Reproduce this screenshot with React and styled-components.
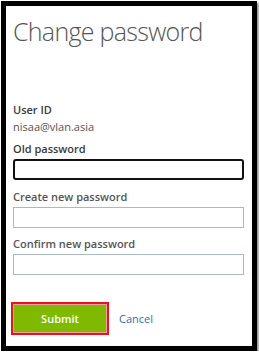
import React from 'react';
import styled, { createGlobalStyle } from 'styled-components';

const Global = createGlobalStyle`
  html, body {
    margin: 0;
    padding: 0;
    background: #fff;
  }
  body {
    font-family: "Open Sans", "Liberation Sans", sans-serif;
  }
`

const Frame = styled.div`
  box-sizing: border-box;
  width: 256px;
  height: 350px;
  margin: 1px 0 0 1px;
  border: 5px solid #000;
  box-shadow: 2px 2px 2px #9a9a9a;
  background: #fff;
  padding: 8px 0 0 7px;
  display: flex;
  flex-direction: column;
`

const Title = styled.h1`
  margin: 0;
  font-size: 25px;
  font-weight: 300;
  color: #555;
  letter-spacing: -0.7px;
  line-height: 34px;
`

const Form = styled.div`
  margin-top: 54px;
  display: flex;
  flex-direction: column;
`

const Label = styled.div`
  font-size: 11px;
  font-weight: 600;
  color: ${p => (p.$dark ? '#3a3a3a' : '#555')};
  line-height: 15px;
  margin-top: ${p => p.$top || 0}px;
`

const Value = styled.div`
  font-size: 11px;
  color: #555;
  line-height: 15px;
  margin-top: 2px;
`

const Input = styled.div`
  box-sizing: border-box;
  width: 231px;
  height: 21px;
  margin-top: 3px;
  border: ${p => (p.$focus ? '2px solid #111' : '1px solid #a9b8c8')};
  border-radius: ${p => (p.$focus ? '3px' : '0')};
  background: #fff;
`

const Actions = styled.div`
  margin-top: 27px;
  margin-left: -2px;
  display: flex;
  align-items: center;
  gap: 10px;
`

const Submit = styled.button`
  box-sizing: border-box;
  width: 98px;
  height: 33px;
  border: 2px solid #e8141c;
  background: #7fba00;
  box-shadow: inset 0 0 0 1px #f5a0a0;
  color: #fff;
  font-family: inherit;
  font-size: 11px;
  font-weight: 600;
  padding: 0;
`

const Cancel = styled.a`
  font-size: 11px;
  color: #2b6fb8;
  text-decoration: none;
`

const App = () => (
  <>
    <Global />
    <Frame>
      <Title>Change password</Title>
      <Form>
        <Label $dark>User ID</Label>
        <Value>nisaa@vlan.asia</Value>
        <Label $dark $top={7}>Old password</Label>
        <Input $focus />
        <Label $top={9}>Create new password</Label>
        <Input />
        <Label $top={8}>Confirm new password</Label>
        <Input />
      </Form>
      <Actions>
        <Submit>Submit</Submit>
        <Cancel href="#">Cancel</Cancel>
      </Actions>
    </Frame>
  </>
)

export default App;
